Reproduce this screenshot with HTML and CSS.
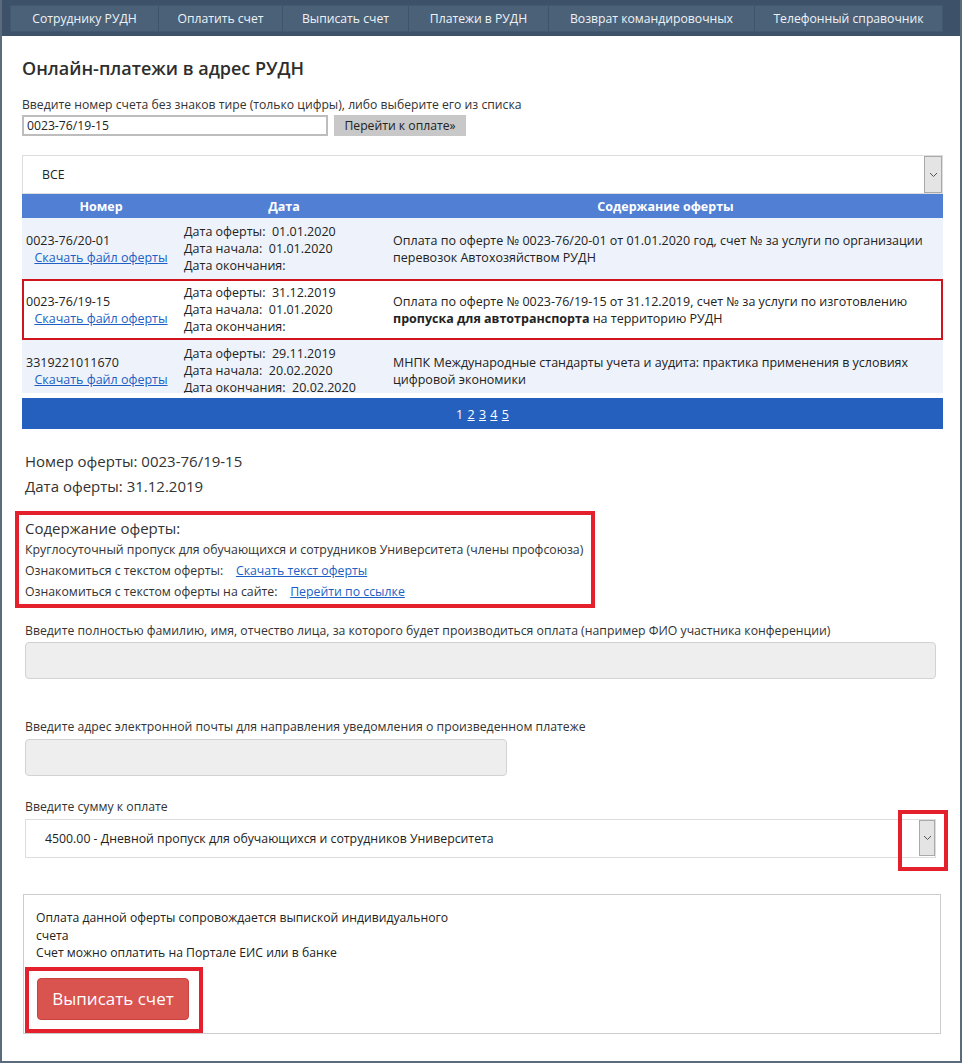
FILE: index.html
```html
<!DOCTYPE html>
<html lang="ru">
<head>
<meta charset="utf-8">
<title>Онлайн-платежи в адрес РУДН</title>
<link rel="stylesheet" href="styles.css">
</head>
<body>
<div class="frame">
  <header class="topbar">
    <nav class="nav">
      <a href="#">Сотруднику РУДН</a>
      <a href="#">Оплатить счет</a>
      <a href="#">Выписать счет</a>
      <a href="#">Платежи в РУДН</a>
      <a href="#">Возврат командировочных</a>
      <a href="#">Телефонный справочник</a>
    </nav>
  </header>

  <main class="content">
    <h1 class="title">Онлайн-платежи в адрес РУДН</h1>

    <div class="lookup-label">Введите номер счета без знаков тире (только цифры), либо выберите его из списка</div>
    <div class="lookup">
      <input class="lookup-input" type="text" value="0023-76/19-15">
      <button class="lookup-btn" type="button">Перейти к оплате»</button>
    </div>

    <div class="select select-all">
      <span class="select-text">ВСЕ</span>
      <span class="select-arrow"><svg width="9" height="6" viewBox="0 0 9 6"><path d="M1 1l3.5 3.5L8 1" fill="none" stroke="#555" stroke-width="1"/></svg></span>
    </div>

    <div class="offers">
      <div class="offers-head">
        <div>Номер</div>
        <div>Дата</div>
        <div>Содержание оферты</div>
      </div>
      <div class="offers-body">
        <div class="offer-row alt">
          <div class="c-num"><span class="num">0023-76/20-01</span><a href="#" class="dl">Скачать файл оферты</a></div>
          <div class="c-date">Дата оферты:&nbsp; 01.01.2020<br>Дата начала:&nbsp; 01.01.2020<br>Дата окончания:</div>
          <div class="c-text">Оплата по оферте № 0023-76/20-01 от 01.01.2020 год, счет № за услуги по организации перевозок Автохозяйством РУДН</div>
        </div>
        <div class="offer-row selected">
          <div class="c-num"><span class="num">0023-76/19-15</span><a href="#" class="dl">Скачать файл оферты</a></div>
          <div class="c-date">Дата оферты:&nbsp; 31.12.2019<br>Дата начала:&nbsp; 01.01.2020<br>Дата окончания:</div>
          <div class="c-text">Оплата по оферте № 0023-76/19-15 от 31.12.2019, счет № за услуги по изготовлению <b>пропуска для автотранспорта</b> на территорию РУДН</div>
        </div>
        <div class="offer-row alt">
          <div class="c-num"><span class="num">3319221011670</span><a href="#" class="dl">Скачать файл оферты</a></div>
          <div class="c-date">Дата оферты:&nbsp; 29.11.2019<br>Дата начала:&nbsp; 20.02.2020<br>Дата окончания:&nbsp; 20.02.2020</div>
          <div class="c-text">МНПК Международные стандарты учета и аудита: практика применения в условиях цифровой экономики</div>
        </div>
      </div>
    </div>
    <div class="pager">1 <a href="#">2</a> <a href="#">3</a> <a href="#">4</a> <a href="#">5</a></div>

    <div class="offer-info">
      <div>Номер оферты: 0023-76/19-15</div>
      <div>Дата оферты: 31.12.2019</div>
    </div>

    <div class="offer-box">
      <div class="offer-box-title">Содержание оферты:</div>
      <div class="offer-line">Круглосуточный пропуск для обучающихся и сотрудников Университета (члены профсоюза)</div>
      <div class="offer-line">Ознакомиться с текстом оферты:&nbsp;&nbsp;&nbsp; <a href="#">Скачать текст оферты</a></div>
      <div class="offer-line">Ознакомиться с текстом оферты на сайте:&nbsp;&nbsp;&nbsp; <a href="#">Перейти по ссылке</a></div>
    </div>

    <div class="field">
      <div class="field-label">Введите полностью фамилию, имя, отчество лица, за которого будет производиться оплата (например ФИО участника конференции)</div>
      <input class="field-input wide" type="text">
    </div>

    <div class="field field-email">
      <div class="field-label">Введите адрес электронной почты для направления уведомления о произведенном платеже</div>
      <input class="field-input narrow" type="text">
    </div>

    <div class="field field-sum">
      <div class="field-label">Введите сумму к оплате</div>
      <div class="select select-sum">
        <span class="select-text">4500.00 - Дневной пропуск для обучающихся и сотрудников Университета</span>
        <span class="select-arrow"><svg width="9" height="6" viewBox="0 0 9 6"><path d="M1 1l3.5 3.5L8 1" fill="none" stroke="#555" stroke-width="1"/></svg></span>
        <span class="mark mark-arrow"></span>
      </div>
    </div>

    <div class="invoice">
      <div class="invoice-text">Оплата данной оферты сопровождается выпиской индивидуального<br>счета<br>Счет можно оплатить на Портале ЕИС или в банке</div>
      <div class="mark-wrap">
        <button class="invoice-btn" type="button">Выписать счет</button>
      </div>
    </div>
  </main>
</div>
</body>
</html>
```

FILE: styles.css
```css
* { box-sizing: border-box; }

body {
  margin: 0;
  background: #ffffff;
  font-family: "Open Sans", "Segoe UI", "DejaVu Sans", sans-serif;
  color: #333333;
}

.frame {
  width: 962px;
  height: 1063px;
  border-left: 2px solid #5b6b7d;
  border-right: 2px solid #5b6b7d;
  border-bottom: 2px solid #5b6b7d;
  background: #ffffff;
  overflow: hidden;
}

/* top navigation */
.topbar {
  background: #3d5168;
  padding: 5px 17px 4px 8px;
}

.nav {
  display: grid;
  grid-template-columns: 147px 124px 126px 140px 206px 1fr;
  background: #4b6178;
  border: 1px solid #425870;
  height: 27px;
}

.nav a {
  color: #eef2f6;
  text-decoration: none;
  font-size: 12.2px;
  line-height: 25px;
  text-align: center;
  border-left: 1px solid #3f546a;
  white-space: nowrap;
}

.nav a:first-child { border-left: none; }

/* content */
.content {
  padding: 0 17px 0 20px;
}

.title {
  margin: 22px 0 0;
  font-size: 18px;
  line-height: 20px;
  font-weight: 600;
  color: #2e2e2e;
}

.lookup-label {
  margin-top: 19px;
  font-size: 12.2px;
  line-height: 16px;
}

.lookup {
  display: flex;
  gap: 6px;
  margin-top: 2px;
}

.lookup-input {
  width: 306px;
  height: 21px;
  border: 2px solid #bdbdbd;
  padding: 0 3px;
  font-family: inherit;
  font-size: 12.2px;
  color: #222;
}

.lookup-btn {
  width: 132px;
  height: 21px;
  border: none;
  background: #c8c8c8;
  font-family: inherit;
  font-size: 12.2px;
  color: #222;
  padding: 0;
}

/* selects */
.select {
  display: flex;
  align-items: center;
  border: 1px solid #dddddd;
  background: #ffffff;
  font-size: 12.3px;
  color: #222;
  position: relative;
}

.select-all {
  margin-top: 19px;
  height: 39px;
  padding-left: 19px;
}

.select-text { flex: 1; }

.select-arrow {
  align-self: stretch;
  width: 18px;
  background: #e4e4e4;
  border: 1px solid #a9a9a9;
  display: flex;
  align-items: center;
  justify-content: center;
}

/* offers table */
.offers {
  font-size: 12.5px;
  color: #222;
}

.offers-head {
  display: grid;
  grid-template-columns: 158px 208px 1fr;
  height: 24px;
  background: #507fd3;
  color: #ffffff;
  font-weight: 700;
  line-height: 25px;
  text-align: center;
}

.offers-body {
  height: 175px;
  overflow: hidden;
}

.offer-row {
  display: grid;
  grid-template-columns: 158px 208px 1fr;
  height: 61px;
  align-items: center;
  line-height: 17px;
}

.offer-row.alt { background: #eef3fb; }

.offer-row.selected {
  background: #ffffff;
  outline: 2px solid #d0141e;
  outline-offset: -2px;
}

.c-num { padding-left: 4px; }
.c-num .num { display: block; }
.c-num .dl { display: block; text-align: center; padding-right: 4px; }

.c-date { padding-left: 4px; }
.c-text { padding: 0 12px 0 5px; }

a { color: #1d5fc4; text-decoration: underline; }

.pager {
  margin-top: 5px;
  height: 31px;
  line-height: 33px;
  background: #2660bf;
  color: #ffffff;
  text-align: center;
  font-size: 12.5px;
  word-spacing: 1px;
}

.pager a { color: #ffffff; }

/* offer details */
.offer-info {
  margin-top: 20px;
  padding-left: 3px;
  font-size: 15px;
  line-height: 25px;
}

.offer-box {
  margin-top: 12px;
  margin-left: -7px;
  width: 580px;
  border: 4px solid #e3202c;
  padding: 2px 6px 2px 6px;
}

.offer-box-title {
  font-size: 15px;
  line-height: 22px;
}

.offer-line {
  font-size: 12.3px;
  line-height: 21px;
}

/* form fields */
.field {
  margin-top: 15px;
  padding-left: 3px;
}

.field-label {
  font-size: 12.25px;
  line-height: 16px;
  color: #333;
}

.field-input {
  display: block;
  margin-top: 3px;
  height: 37px;
  background: #eeeeee;
  border: 1px solid #d2d2d2;
  border-radius: 4px;
}

.field-input.wide { width: 911px; }
.field-input.narrow { width: 482px; margin-top: 4px; }

.field-email { margin-top: 40px; }
.field-sum { margin-top: 23px; }

.select-sum {
  margin-top: 4px;
  width: 911px;
  height: 39px;
  padding-left: 19px;
}

.select-sum .select-arrow {
  width: 16px;
  margin: 0 0 1px;
}

.mark {
  position: absolute;
  border: 4px solid #e3202c;
}

.mark-arrow {
  left: 872px;
  top: -10px;
  width: 50px;
  height: 61px;
}

/* invoice box */
.invoice {
  margin-top: 36px;
  margin-left: 1px;
  width: 918px;
  height: 140px;
  border: 1px solid #cccccc;
  padding: 14px 12px 0 12px;
}

.invoice-text {
  font-size: 12.2px;
  line-height: 17.5px;
  color: #222;
  white-space: nowrap;
}

.mark-wrap {
  display: inline-block;
  margin-top: 5px;
  margin-left: -11px;
  border: 4px solid #e3202c;
  padding: 7px 10px 9px 8px;
}

.invoice-btn {
  display: block;
  width: 152px;
  height: 42px;
  background: #d9534f;
  border: 1px solid #c9423e;
  border-radius: 4px;
  color: #ffffff;
  font-family: inherit;
  font-size: 17px;
  padding: 0;
}
```
